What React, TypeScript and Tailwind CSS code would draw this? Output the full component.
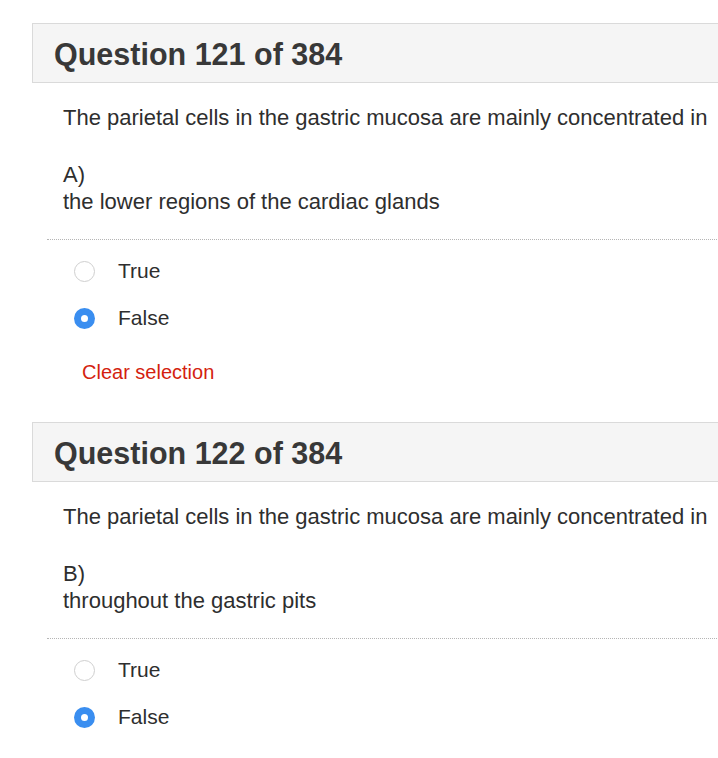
import React from "react";

type Q = { num: number; letter: string; answer: string; showClear: boolean };

const questions: Q[] = [
  { num: 121, letter: "A)", answer: "the lower regions of the cardiac glands", showClear: true },
  { num: 122, letter: "B)", answer: "throughout the gastric pits", showClear: false },
];

function Radio({ checked }: { checked: boolean }) {
  if (checked) {
    return (
      <span className="flex h-[21px] w-[21px] shrink-0 items-center justify-center rounded-full bg-[#3a8ef0]">
        <span className="h-[7px] w-[7px] rounded-full bg-white" />
      </span>
    );
  }
  return <span className="block h-[21px] w-[21px] shrink-0 rounded-full border-[1.5px] border-[#cfcfcf] bg-white" />;
}

function Question({ q }: { q: Q }) {
  return (
    <section className="mb-[38px]">
      <div className="flex h-[60px] w-[760px] items-center border border-[#dadada] bg-[#f5f5f5] pl-[21px] pt-[3px]">
        <h2 className="text-[30.5px] font-bold leading-none text-[#383838]">
          Question {q.num} of 384
        </h2>
      </div>
      <div className="pl-[31px] text-[22px] leading-[27px] text-[#2e2e2e]">
        <p className="mt-[21px] whitespace-nowrap">
          The parietal cells in the gastric mucosa are mainly concentrated in
        </p>
        <p className="mt-[30px]">{q.letter}</p>
        <p>{q.answer}</p>
      </div>
      <div className="ml-[15px] mt-[24px] w-[760px] border-t border-dotted border-[#b5b5b5]" />
      <div className="mt-[18px] flex flex-col gap-[21px] pl-[42px]">
        {[
          ["True", false],
          ["False", true],
        ].map(([label, checked]) => (
          <label key={label as string} className="flex h-[26px] items-center gap-[23px]">
            <Radio checked={checked as boolean} />
            <span className="text-[21px] leading-[26px] text-[#2e2e2e]">{label as string}</span>
          </label>
        ))}
      </div>
      {q.showClear && (
        <div className="ml-[50px] mt-[29px] text-[20px] leading-[24px] text-[#d41f10]">Clear selection</div>
      )}
    </section>
  );
}

export default function App() {
  return (
    <div
      className="h-[758px] w-[718px] overflow-hidden bg-white pl-[32px] pt-[23px]"
      style={{ fontFamily: '"Liberation Sans", Arial, sans-serif' }}
    >
      {questions.map((q) => (
        <Question key={q.num} q={q} />
      ))}
    </div>
  );
}
